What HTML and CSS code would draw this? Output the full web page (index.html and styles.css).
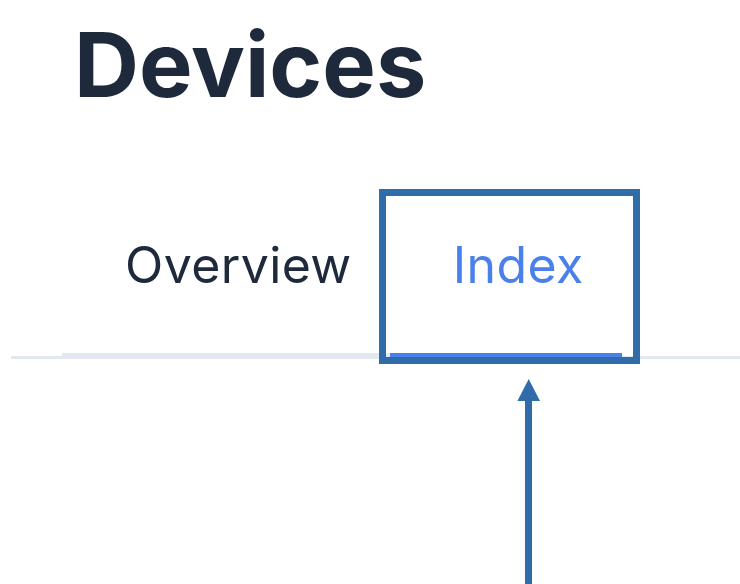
FILE: index.html
```html
<!DOCTYPE html>
<html lang="en">
<head>
    <meta charset="UTF-8">
    <meta name="viewport" content="width=device-width, initial-scale=1.0">
    <title>Devices</title>
    <link rel="stylesheet" href="styles.css">
</head>
<body>
    <main class="page">
        <h1 class="page-title">Devices</h1>
        <nav class="tabs">
            <a href="#overview" class="tab">Overview</a>
            <a href="#index" class="tab tab-active">Index</a>
        </nav>
    </main>

    <!-- annotation: box around the active tab and an arrow pointing at it -->
    <div class="highlight-box"></div>
    <svg class="callout-arrow" width="26" height="206" viewBox="0 0 26 206">
        <polygon points="12.7,1 24,23 1.4,23" fill="#306caa"/>
        <rect x="9" y="22" width="7" height="184" fill="#306caa"/>
    </svg>
</body>
</html>
```

FILE: styles.css
```css
body {
    font-family: Inter, 'Noto Sans', sans-serif;
    margin: 0;
    padding: 0;
    background-color: #fff;
    color: #1e293b;
}
.page {
    padding-top: 18px;
}
.page-title {
    margin: 0 0 64px 74px;
    font-size: 90px;
    line-height: 93px;
    font-weight: 700;
    color: #1e293b;
}
.tabs {
    display: flex;
    margin-left: 11px;
    padding-left: 51px;
    border-bottom: 3px solid #e2e8f0;
}
.tab {
    padding: 60px 38px 58px 63px;
    margin-bottom: -3px;
    font-size: 50px;
    line-height: 60px;
    letter-spacing: 0.4px;
    color: #1e293b;
    text-decoration: none;
    border-bottom: 6px solid #e2e8f0;
}
.tab-active {
    color: #4a80eb;
    border-bottom-color: #4a80eb;
}
.highlight-box {
    position: absolute;
    left: 379px;
    top: 189px;
    width: 261px;
    height: 175px;
    box-sizing: border-box;
    border: 7px solid #306caa;
}
.callout-arrow {
    position: absolute;
    left: 516px;
    top: 378px;
}
```
